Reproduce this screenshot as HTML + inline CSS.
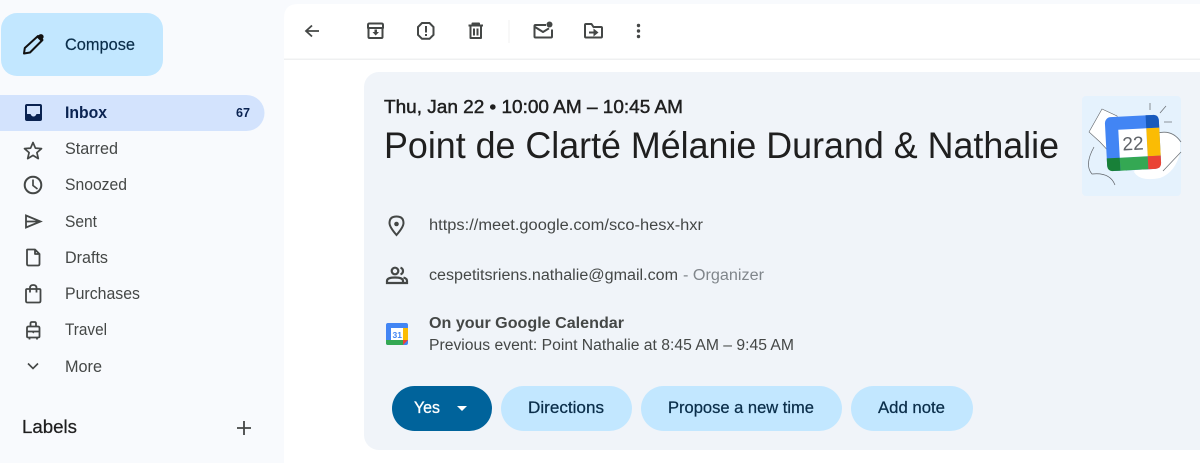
<!DOCTYPE html>
<html><head><meta charset="utf-8"><style>
html,body{margin:0;padding:0;width:1200px;height:463px;overflow:hidden;background:#f8fafd}
svg{display:block;filter:blur(.3px)}
text{font-family:"Liberation Sans",sans-serif}
.n{font-size:16.500px;fill:#444746}
.ic{fill:none;stroke:#444746;stroke-width:2}
.ct{font-size:15.500px;fill:#444746}
.b{font-size:16.500px;fill:#0a2e4a;stroke:#0a2e4a;stroke-width:.25px}
</style></head><body>
<svg width="1200" height="463" viewBox="0 0 1200 463" xmlns="http://www.w3.org/2000/svg">
<rect width="1200" height="463" fill="#f8fafd"/>
<path d="M298 4H1200V463H284V18Q284 4 298 4Z" fill="#fff"/>
<rect x="284" y="58.500" width="916" height="1.500" fill="#eff0f1"/>
<rect x="364" y="72" width="850" height="378" rx="15" fill="#f0f4f9"/>

<!-- compose -->
<rect x="1" y="13" width="162" height="63" rx="16" fill="#c2e7ff"/>
<path d="M24 53.500 24.800 48 38 36 42.500 40 30 52.500Z" fill="none" stroke="#111" stroke-width="2" stroke-linejoin="round"/>
<path d="M36.500 37 39.500 34.500Q41.500 33.500 43 35 44.300 36.800 43 38.500L41 41.500Z" fill="#111"/>
<text x="65" y="50" font-size="16.500" fill="#0a2e4a" stroke="#0a2e4a" stroke-width=".2" textLength="70" lengthAdjust="spacingAndGlyphs">Compose</text>

<!-- nav -->
<path d="M0 95H246.500a18 18 0 0 1 0 36H0Z" fill="#d3e3fd"/>
<rect x="25" y="104" width="17" height="17" rx="2" fill="#0a2351"/>
<path d="M27 106H40V114H36.500Q35.500 116.500 33.500 116.500 31.500 116.500 30.500 114H27Z" fill="#d3e3fd"/>
<text x="65" y="118" font-size="16.500" font-weight="700" fill="#0a2351" textLength="42" lengthAdjust="spacingAndGlyphs">Inbox</text>
<text x="236" y="117" font-size="12.500" font-weight="700" fill="#0a2351" textLength="14" lengthAdjust="spacingAndGlyphs">67</text>

<path class="ic" style="stroke-width:1.700;stroke-linejoin:round" d="M33 142.500l2.400 5.600 6.100.5-4.600 4 1.400 6-5.300-3.200-5.300 3.200 1.400-6-4.600-4 6.100-.5z"/>
<text class="n" x="65" y="154" textLength="53" lengthAdjust="spacingAndGlyphs">Starred</text>

<circle class="ic" cx="33" cy="185" r="8.300"/>
<path class="ic" style="stroke-width:1.700" d="M33 179.500V185.500L37.500 189"/>
<text class="n" x="65" y="190" textLength="62" lengthAdjust="spacingAndGlyphs">Snoozed</text>

<path class="ic" style="stroke-width:1.800;stroke-linejoin:miter" d="M26 215.500 40.500 221.500 26 227.500V215.500ZM26 221.500H40"/>
<text class="n" x="65" y="227" textLength="32" lengthAdjust="spacingAndGlyphs">Sent</text>

<path class="ic" style="stroke-width:1.800;stroke-linejoin:round" d="M27.500 249.500H35L39.500 254V264Q39.500 265.500 38 265.500H28.500Q27 265.500 27 264V250Q27 249.500 27.500 249.500ZM35 249.500V254H39.500"/>
<text class="n" x="65" y="263" textLength="43" lengthAdjust="spacingAndGlyphs">Drafts</text>

<path class="ic" style="stroke-width:1.800;stroke-linejoin:round" d="M27 289H39.500Q40.500 289 40.500 290V301Q40.500 302.500 39 302.500H27.500Q26 302.500 26 301V290Q26 289 27 289ZM30 292.500V288Q30 285 33.200 285 36.500 285 36.500 288V292.500"/>
<text class="n" x="65" y="299" textLength="75" lengthAdjust="spacingAndGlyphs">Purchases</text>

<path class="ic" style="stroke-width:1.800;stroke-linejoin:round" d="M28.500 326.500H38Q39.500 326.500 39.500 328V336.500Q39.500 337.500 38 337.500H28.500Q27 337.500 27 336.500V328Q27 326.500 28.500 326.500ZM30.500 326.500V323.500Q30.500 322 32 322H34.500Q36 322 36 323.500V326.500M27 331.500H39.500M29.500 337.500V339.500M37 337.500V339.500"/>
<path d="M31.500 331.500H35L33.300 333.500Z" fill="#444746"/>
<text class="n" x="65" y="335" textLength="42" lengthAdjust="spacingAndGlyphs">Travel</text>

<path class="ic" style="stroke-width:1.600" d="M28 363.500 33 368.500 38 363.500"/>
<text class="n" x="65" y="372" textLength="37" lengthAdjust="spacingAndGlyphs">More</text>

<text x="22" y="433" font-size="18.500" fill="#1f1f1f" stroke="#1f1f1f" stroke-width=".25" textLength="55" lengthAdjust="spacingAndGlyphs">Labels</text>
<path d="M244 421V435M237 428H251" stroke="#444746" stroke-width="1.800" fill="none"/>

<!-- toolbar -->
<path class="ic" style="stroke-width:1.800" d="M319 31H306.500M312 25.500 306 31 312 36.500"/>
<path class="ic" style="stroke-width:2;stroke-linejoin:round" d="M368.500 28V37Q368.500 38 369.500 38H381.500Q382.500 38 382.500 37V28M368 25Q368 23.500 369.500 23.500H381.500Q383 23.500 383 25V28H368Z"/>
<path d="M374.500 29.500H377V32H379L375.700 35.500 372.500 32H374.500Z" fill="#444746"/>
<path class="ic" style="stroke-width:2" d="M422 23H429.500L433.500 27V34.800L429.500 38.800H422L418 34.800V27Z"/>
<path d="M425 26H427V32.500H425ZM425 34H427V36H425Z" fill="#444746"/>
<path class="ic" style="stroke-width:2;stroke-linejoin:round" d="M470.500 26.500V38H481V26.500M468.500 25.500H483M472.500 25V23.500H479V25"/>
<path d="M473 28.500H475V35.500H473ZM476.500 28.500H478.500V35.500H476.500Z" fill="#444746"/>
<rect x="508.500" y="20" width="1" height="23" fill="#f0f1f2"/>
<path class="ic" style="stroke-width:2;stroke-linejoin:round" d="M546 25H535.500Q534.500 25 534.500 26V36.500Q534.500 37.500 535.500 37.500H551Q552 37.500 552 36.500V29.500M535 27 543 32 549 28.300"/>
<circle cx="549.500" cy="24.500" r="3" fill="#444746"/>
<path class="ic" style="stroke-width:2;stroke-linejoin:round" d="M585 25Q585 24 586 24H591.500L593.500 27H601Q602 27 602 28V36.500Q602 37.500 601 37.500H586Q585 37.500 585 36.500Z"/>
<path class="ic" style="stroke-width:2" d="M589 32.500H596"/>
<path d="M593.500 28.500 598.500 32.500 593.500 36.500Z" fill="#444746"/>
<circle cx="638.500" cy="25.500" r="1.700" fill="#444746"/><circle cx="638.500" cy="31" r="1.700" fill="#444746"/><circle cx="638.500" cy="36.500" r="1.700" fill="#444746"/>

<!-- card text -->
<text x="384" y="113" font-size="18" fill="#1f1f1f" stroke="#1f1f1f" stroke-width=".45" textLength="299" lengthAdjust="spacingAndGlyphs">Thu, Jan 22 • 10:00 AM – 10:45 AM</text>
<text x="384" y="158" font-size="37" fill="#1f1f1f" textLength="675" lengthAdjust="spacingAndGlyphs">Point de Clarté Mélanie Durand &amp; Nathalie</text>

<path class="ic" d="M396.500 216.500Q403.500 216.500 403.500 223 403.500 227 396.500 235 389.500 227 389.500 223 389.500 216.500 396.500 216.500Z"/>
<circle cx="396.500" cy="224" r="2.300" fill="#444746"/>
<text class="ct" x="429" y="230" font-size="16" textLength="274" lengthAdjust="spacingAndGlyphs">https://meet.google.com/sco-hesx-hxr</text>

<circle cx="395" cy="271" r="3.300" fill="none" stroke="#444746" stroke-width="2.200"/>
<path class="ic" style="stroke-width:2.200" d="M387 283V281Q387 277.500 395 277.500 403 277.500 403 281V283ZM400.500 267.600Q403 268.500 403 271 403 273.500 400.500 274.400M403.500 277.500Q407 278.500 407 281V283H404"/>
<text class="ct" x="429" y="280" textLength="249" lengthAdjust="spacingAndGlyphs">cespetitsriens.nathalie@gmail.com</text>
<text x="683" y="280" font-size="15.500" fill="#80868b" textLength="81" lengthAdjust="spacingAndGlyphs">- Organizer</text>

<!-- small calendar -->
<rect x="386" y="323" width="22" height="22" rx="2" fill="#4285f4"/>
<rect x="391" y="328" width="12" height="12" fill="#fff"/>
<path d="M403 328H408V340H403Z" fill="#fbbc04"/>
<path d="M386 340H403V345H388Q386 345 386 343Z" fill="#34a853"/>
<path d="M403 340H408L403 345Z" fill="#ea4335"/>
<text x="392.500" y="338" font-size="8.500" font-weight="700" fill="#4285f4">31</text>
<text x="429" y="328" font-size="15.500" font-weight="700" fill="#444746" textLength="195" lengthAdjust="spacingAndGlyphs">On your Google Calendar</text>
<text x="429" y="350" font-size="15.500" fill="#444746" textLength="365" lengthAdjust="spacingAndGlyphs">Previous event: Point Nathalie at 8:45 AM – 9:45 AM</text>

<!-- illustration -->
<rect x="1082" y="96" width="99" height="100" rx="4" fill="#e5f2fd"/>
<path d="M1089 132 1102 109 1117 116 1126 170 1100 142Z" fill="#fff" stroke="#5f6368" stroke-width=".6"/>
<path d="M1150 136Q1170 126 1180 142V152Q1176 172 1160 178 1140 182 1134 172Z" fill="#fff"/>
<path d="M1094 147Q1084 165 1092 174 1110 172 1115 185" fill="none" stroke="#5f6368" stroke-width=".7"/>
<path d="M1150 136Q1170 126 1181 142M1163 171 1181 152M1150 103V110M1166 106 1160 113M1172 122H1164" fill="none" stroke="#70757a" stroke-width=".8"/>
<g transform="rotate(-3 1133 143)">
<rect x="1106" y="116" width="54" height="54" rx="6" fill="#4285f4"/>
<path d="M1147 116H1154Q1160 116 1160 122V129H1147Z" fill="#185abc"/>
<rect x="1147" y="129" width="13" height="28" fill="#fbbc04"/>
<path d="M1119 157H1147V170H1119Z" fill="#34a853"/>
<path d="M1106 157H1119V170H1112Q1106 170 1106 164Z" fill="#188038"/>
<path d="M1147 157H1160V164Q1160 170 1154 170H1147Z" fill="#ea4335"/>
<rect x="1119" y="129" width="28" height="28" fill="#fff"/>
<text x="1133" y="150" font-size="19" text-anchor="middle" fill="#5f6368">22</text>
</g>

<!-- buttons -->
<rect x="392" y="386" width="100" height="45" rx="22.500" fill="#00639b"/>
<text x="414" y="413" font-size="16.500" fill="#fff" stroke="#fff" stroke-width=".3" textLength="26" lengthAdjust="spacingAndGlyphs">Yes</text>
<path d="M457 406H467L462 411Z" fill="#fff"/>
<rect x="501" y="386" width="131" height="45" rx="22.500" fill="#c2e7ff"/>
<text class="b" x="528" y="413" textLength="76" lengthAdjust="spacingAndGlyphs">Directions</text>
<rect x="641" y="386" width="201" height="45" rx="22.500" fill="#c2e7ff"/>
<text class="b" x="668" y="413" textLength="146" lengthAdjust="spacingAndGlyphs">Propose a new time</text>
<rect x="851" y="386" width="122" height="45" rx="22.500" fill="#c2e7ff"/>
<text class="b" x="878" y="413" textLength="67" lengthAdjust="spacingAndGlyphs">Add note</text>
</svg>
</body></html>
